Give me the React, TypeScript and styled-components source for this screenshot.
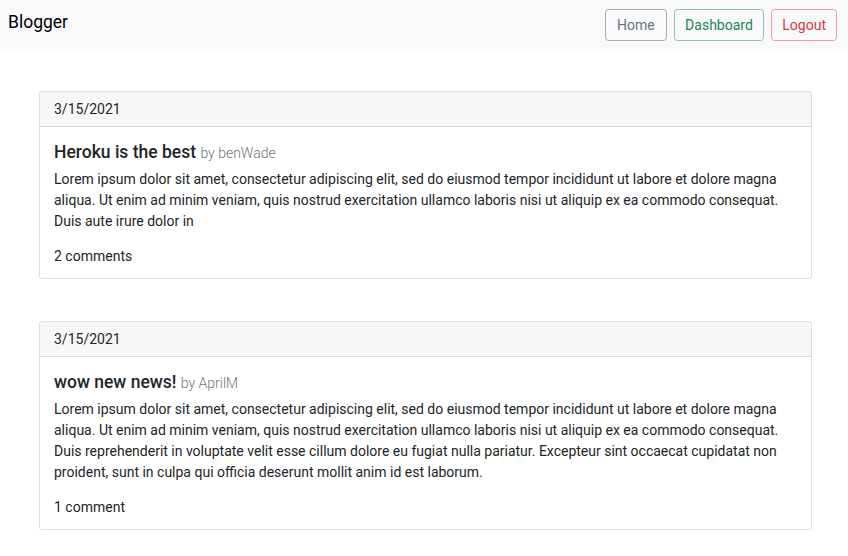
import React from "react";
import styled, { createGlobalStyle } from "styled-components";

type Post = {
  id: number;
  date: string;
  title: string;
  author: string;
  body: string;
  comments: number;
};

const posts: Post[] = [
  {
    id: 1,
    date: "3/15/2021",
    title: "Heroku is the best",
    author: "benWade",
    body:
      "Lorem ipsum dolor sit amet, consectetur adipiscing elit, sed do eiusmod tempor incididunt ut labore et dolore magna aliqua. Ut enim ad minim veniam, quis nostrud exercitation ullamco laboris nisi ut aliquip ex ea commodo consequat. Duis aute irure dolor in",
    comments: 2,
  },
  {
    id: 2,
    date: "3/15/2021",
    title: "wow new news!",
    author: "AprilM",
    body:
      "Lorem ipsum dolor sit amet, consectetur adipiscing elit, sed do eiusmod tempor incididunt ut labore et dolore magna aliqua. Ut enim ad minim veniam, quis nostrud exercitation ullamco laboris nisi ut aliquip ex ea commodo consequat. Duis reprehenderit in voluptate velit esse cillum dolore eu fugiat nulla pariatur. Excepteur sint occaecat cupidatat non proident, sunt in culpa qui officia deserunt mollit anim id est laborum.",
    comments: 1,
  },
];

export default function App() {
  return (
    <>
      <GlobalStyle />
      <Navbar>
        <Brand>Blogger</Brand>
        <NavButtons>
          <OutlineButton color="#6c757d" border="#a7acb1" $pad={11}>
            Home
          </OutlineButton>
          <OutlineButton color="#198754" border="#8cc3aa" $pad={10.5}>
            Dashboard
          </OutlineButton>
          <OutlineButton color="#dc3545" border="#ee9aa2" $pad={10}>
            Logout
          </OutlineButton>
        </NavButtons>
      </Navbar>
      <Main>
        {posts.map((post) => (
          <Card key={post.id}>
            <CardHeader>{post.date}</CardHeader>
            <CardBody>
              <Title>
                {post.title} <Author>by {post.author}</Author>
              </Title>
              <Text>{post.body}</Text>
              <Comments>
                {post.comments} {post.comments === 1 ? "comment" : "comments"}
              </Comments>
            </CardBody>
          </Card>
        ))}
      </Main>
    </>
  );
}

const GlobalStyle = createGlobalStyle`
  * {
    box-sizing: border-box;
  }
  body {
    margin: 0;
    background: #fff;
    color: #212529;
    font-family: Roboto, "Noto Sans", "Liberation Sans", sans-serif;
    font-size: 14px;
    line-height: 21px;
  }
`;

const Navbar = styled.nav`
  display: flex;
  align-items: center;
  justify-content: space-between;
  height: 49px;
  padding: 0 11px 0 8px;
  background-color: #f8f9fa;
`;

const Brand = styled.div`
  font-size: 17.5px;
  line-height: 24px;
  color: #000;
  margin-top: -5px;
`;

const NavButtons = styled.div`
  display: flex;
  gap: 7px;
  margin-top: 1px;
`;

const OutlineButton = styled.button<{ color: string; border: string; $pad: number }>`
  height: 32px;
  padding: 0 ${(p) => p.$pad}px;
  font-family: inherit;
  font-size: 14px;
  background: transparent;
  color: ${(p) => p.color};
  border: 1px solid ${(p) => p.border};
  border-radius: 3.5px;
  cursor: pointer;
`;

const Main = styled.main`
  padding: 0 36px 0 39px;
`;

const Card = styled.div`
  margin-top: 42px;
  border: 1px solid rgba(0, 0, 0, 0.125);
  border-radius: 3.5px;
  background: #fff;
`;

const CardHeader = styled.div`
  padding: 6.5px 14px;
  background-color: rgba(0, 0, 0, 0.03);
  border-bottom: 1px solid rgba(0, 0, 0, 0.125);
`;

const CardBody = styled.div`
  padding: 15px 14px 11px;
`;

const Title = styled.h5`
  margin: 0 0 5px;
  font-size: 17.5px;
  line-height: 21px;
  font-weight: 500;
`;

const Author = styled.small`
  font-size: 14px;
  font-weight: 300;
  color: #6c757d;
`;

const Text = styled.p`
  margin: 0 0 14px;
`;

const Comments = styled.div``;
